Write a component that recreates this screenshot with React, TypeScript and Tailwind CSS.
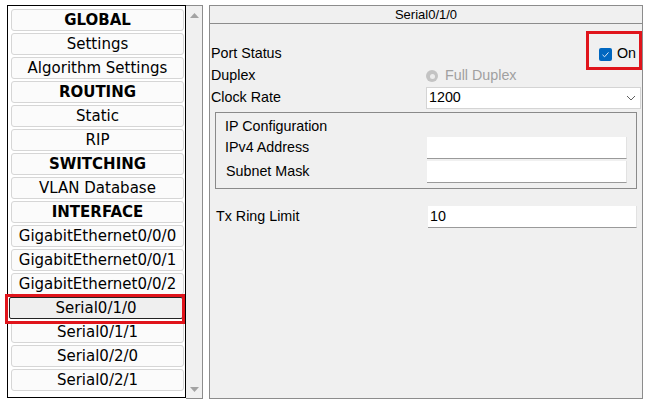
import React from "react";

const ITEMS: { label: string; header?: boolean; selected?: boolean }[] = [
  { label: "GLOBAL", header: true },
  { label: "Settings" },
  { label: "Algorithm Settings" },
  { label: "ROUTING", header: true },
  { label: "Static" },
  { label: "RIP" },
  { label: "SWITCHING", header: true },
  { label: "VLAN Database" },
  { label: "INTERFACE", header: true },
  { label: "GigabitEthernet0/0/0" },
  { label: "GigabitEthernet0/0/1" },
  { label: "GigabitEthernet0/0/2" },
  { label: "Serial0/1/0", selected: true },
  { label: "Serial0/1/1" },
  { label: "Serial0/2/0" },
  { label: "Serial0/2/1" },
];

function NavItem({ label, header, selected }: { label: string; header?: boolean; selected?: boolean }) {
  return (
    <div className={selected ? "relative z-10" : "relative"}>
      <div
        className={
          selected
            ? "h-[22px] -ml-[2px] mr-[1px] flex items-center justify-center rounded-[2px] border border-[#222] bg-[#efefef] text-black"
            : "h-[22px] flex items-center justify-center rounded-[3px] border border-[#d6d6d6] bg-[#fbfbfb] text-black"
        }
      >
        <span className={header ? "font-bold" : ""}>{label}</span>
      </div>
      {/* annotation box */}
      {selected && (
        <div className="absolute z-10 -left-[6px] -top-[3px] w-[180px] h-[30px] border-[3px] border-[#e0141b] pointer-events-none" />
      )}
    </div>
  );
}

function Row({ label, children, labelClass = "w-[215px]" }: { label: string; children?: React.ReactNode; labelClass?: string }) {
  return (
    <div className="flex h-[22px] items-center">
      <div className={labelClass}>{label}</div>
      <div className="flex-1 h-full flex items-center">{children}</div>
    </div>
  );
}

function TextBox({ value = "", w = "w-full" }: { value?: string; w?: string }) {
  return (
    <div className={`${w} h-[22px] flex items-center bg-white border-b border-[#9a9a9a] border-r border-r-[#e2e2e2] pl-[2px]`}>
      {value}
    </div>
  );
}

export default function App() {
  return (
    <div className="w-[650px] h-[404px] bg-white flex gap-[6px] pl-[7px] pt-[5px] overflow-hidden">
      {/* left navigation */}
      <div className="w-[196px] h-[394px] flex shrink-0">
        <div
          className="w-[179px] h-[393px] border border-black bg-white flex flex-col gap-[2px] pt-[3px] pl-[3px] pr-[1px] text-[15px] leading-none"
          style={{ fontFamily: '"DejaVu Sans", Verdana, sans-serif' }}
        >
          {ITEMS.map((it) => (
            <NavItem key={it.label} {...it} />
          ))}
        </div>
        <div className="w-[17px] h-[394px] bg-[#f0f0f0] border-t border-r border-b border-[#8c8c8c] flex flex-col items-center justify-between pt-[7px] pb-[6px]">
          <svg width="9" height="5" viewBox="0 0 9 5">
            <path d="M0 5 L4.5 0 L9 5 Z" fill="#a3a3a3" />
          </svg>
          <svg width="9" height="5" viewBox="0 0 9 5">
            <path d="M0 0 L4.5 5 L9 0 Z" fill="#a3a3a3" />
          </svg>
        </div>
      </div>

      {/* right config panel */}
      <div
        className="w-[434px] h-[394px] border border-[#8c8c8c] bg-[#f0f0f0] flex flex-col text-[14.3px] text-black"
        style={{ fontFamily: '"Liberation Sans", Arial, sans-serif' }}
      >
        <div className="h-[18px] border-b border-[#8c8c8c] flex items-center justify-center text-[13px] leading-none">
          Serial0/1/0
        </div>

        <div className="flex flex-col pt-[19px] pl-px pr-px">
          <Row label="Port Status">
            <div className="relative flex-1 flex justify-end items-center gap-[5px] pr-[5px]">
              <div className="w-[13px] h-[13px] rounded-[2px] bg-[#0067c0] flex items-center justify-center">
                <svg width="9" height="9" viewBox="0 0 9 9">
                  <path d="M1.5 4.8 L3.6 6.8 L7.5 2.4" fill="none" stroke="#dbe9f7" strokeWidth="1" />
                </svg>
              </div>
              <span>On</span>
              {/* annotation box */}
              <div className="absolute right-[-1px] top-[-12px] w-[56px] h-[39px] border-[3px] border-[#e0141b]" />
            </div>
          </Row>
          <Row label="Duplex">
            <div className="flex items-center gap-[7px]">
              <div className="w-[12px] h-[12px] rounded-full bg-[#c3c3c3] flex items-center justify-center">
                <div className="w-[5px] h-[5px] rounded-full bg-[#ececec]" />
              </div>
              <span className="text-[#a0a0a0]">Full Duplex</span>
            </div>
          </Row>
          <Row label="Clock Rate">
            <div className="w-full h-[22px] bg-white border border-[#d4d4d4] flex items-center justify-between pl-[2px] pr-[4px]">
              <span>1200</span>
              <svg width="10" height="6" viewBox="0 0 10 6">
                <path d="M1 1 L5 5 L9 1" fill="none" stroke="#606060" strokeWidth="1" />
              </svg>
            </div>
          </Row>

          {/* IP configuration group */}
          <div className="mt-[3px] mx-[4px] h-[77px] border border-[#8a8a8a] flex flex-col pt-[3px] pl-[9px] pr-[9px]">
            <div className="h-[21px] flex items-center">IP Configuration</div>
            <div className="flex flex-col gap-[2px]">
              <Row label="IPv4 Address" labelClass="w-[202px]">
                <TextBox />
              </Row>
              <Row label="Subnet Mask" labelClass="w-[202px] pl-px">
                <TextBox />
              </Row>
            </div>
          </div>

          <div className="mt-[17px] pl-[5px] pr-[4px]">
            <Row label="Tx Ring Limit" labelClass="w-[212px]">
              <TextBox value="10" />
            </Row>
          </div>
        </div>
      </div>
    </div>
  );
}
